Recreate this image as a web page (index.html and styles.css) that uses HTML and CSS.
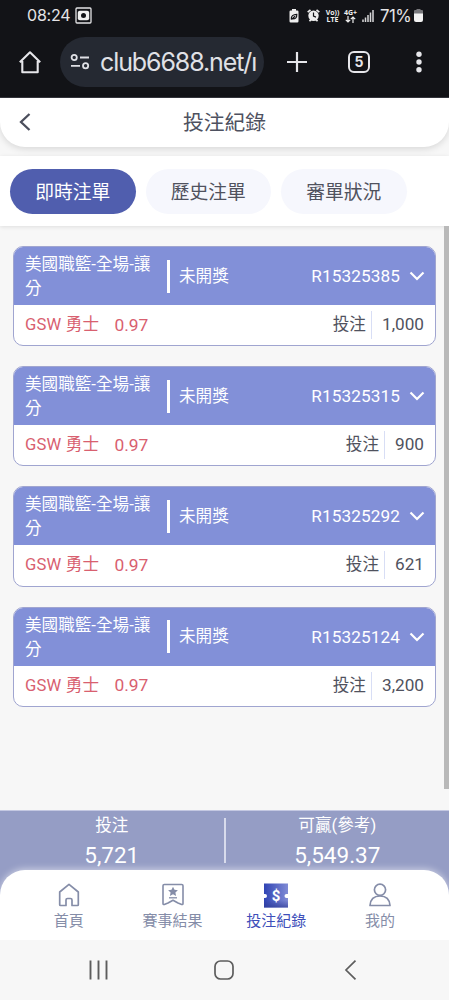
FILE: index.html
```html
<!DOCTYPE html>
<html lang="zh-Hant">
<head>
    <meta charset="UTF-8">
    <meta name="viewport" content="width=device-width, initial-scale=1.0">
    <title>投注紀錄</title>
    <link rel="stylesheet" href="styles.css">
</head>
<body>
    <div class="status-bar">
        <span class="time">08:24</span>
        <svg class="rec-icon" width="17" height="17" viewBox="0 0 17 17">
            <rect x="1" y="1" width="15" height="15" rx="1" fill="none" stroke="#e4e4e6" stroke-width="1.3"/>
            <rect x="2.8" y="3.8" width="11.4" height="9.4" rx="2" fill="#f0f0f0"/>
            <circle cx="8.5" cy="8.5" r="2.5" fill="#121317"/>
        </svg>
        <div class="status-right">
            <svg width="10" height="14" viewBox="0 0 10 14">
                <path d="M3 0h4v1.5h1.3q1.2 0 1.2 1.2v9.6q0 1.2-1.2 1.2H1.700q-1.200 0-1.200-1.200V2.700q0-1.200 1.200-1.200H3z" fill="#eee"/>
                <path d="M2.300 10.500C2 7 4 5.500 7.800 5.300C8 9 6 10.500 3.500 9.500M2.500 10.500L6 7.200" fill="none" stroke="#121317" stroke-width="1.200"/>
            </svg>
            <svg width="13" height="13" viewBox="0 0 13 13">
                <path d="M.7 3.200L3.500.8M12.300 3.200L9.500.8M2.500 12.300l1.500-1.800M10.500 12.300L9 10.500" stroke="#eee" stroke-width="1.700"/>
                <circle cx="6.500" cy="6.700" r="5.200" fill="#eee"/>
                <path d="M6.500 3.500v3.600l2.500 1" fill="none" stroke="#121317" stroke-width="1.200"/>
            </svg>
            <span class="net"><b>Vo))</b><b>LTE</b></span>
            <span class="net net-4g">
                <b>4G+</b>
                <svg width="11" height="7" viewBox="0 0 11 7">
                    <path d="M3 0v6M.8 3.800L3 6l2.200-2.200M8 7V1M5.800 3.200L8 1l2.200 2.200" fill="none" stroke="#eee" stroke-width="1.200"/>
                </svg>
            </span>
            <svg class="signal" width="12" height="12" viewBox="0 0 12 12">
                <path d="M1 12V9.500M3.500 12V7.500M6 12V5M8.500 12V2.500M11 12V0" stroke="#d8d8da" stroke-width="1.500"/>
            </svg>
            <span class="percent">71%</span>
            <svg width="9" height="13" viewBox="0 0 9 13">
                <path d="M2.500 0h4v1H8q1 0 1 1v3H0V2q0-1 1-1h1.500z" fill="#77777b"/>
                <path d="M0 4.500h9V11q0 2-2 2H2q-2 0-2-2z" fill="#f2f2f2"/>
            </svg>
        </div>
    </div>

    <div class="browser-bar">
        <svg class="home-icon" width="24" height="24" viewBox="0 0 24 24">
            <path d="M1.800 12.200L12 2.300l10.200 9.900M4.300 11v11.300h15.400V11" fill="none" stroke="#e6e6ea" stroke-width="2.100" stroke-linejoin="round"/>
        </svg>
        <div class="url-box">
            <svg width="20" height="18" viewBox="0 0 20 18">
                <g fill="none" stroke="#dfe0e5" stroke-width="1.800">
                    <circle cx="4.200" cy="4.500" r="2.600"/>
                    <path d="M10 4.500h9M1 12.800h9"/>
                    <circle cx="15.600" cy="12.800" r="2.600"/>
                </g>
            </svg>
            <span class="url">club6688.net/ı</span>
        </div>
        <svg class="plus-icon" width="22" height="22" viewBox="0 0 22 22">
            <path d="M11 1v20M1 11h20" stroke="#e6e6ea" stroke-width="2.200"/>
        </svg>
        <span class="tab-count">5</span>
        <svg class="dots-icon" width="6" height="22" viewBox="0 0 6 22">
            <g fill="#e6e6ea">
                <circle cx="3" cy="3.300" r="2.700"/>
                <circle cx="3" cy="11" r="2.700"/>
                <circle cx="3" cy="18.700" r="2.700"/>
            </g>
        </svg>
    </div>

    <div class="page">
        <header class="page-header">
            <svg class="back" width="12" height="18" viewBox="0 0 12 18">
                <path d="M10.500 1L2 9l8.500 8" fill="none" stroke="#4b4e5c" stroke-width="2.300"/>
            </svg>
            <h1>投注紀錄</h1>
        </header>

        <div class="tabs">
            <button class="tab active">即時注單</button>
            <button class="tab">歷史注單</button>
            <button class="tab">審單狀況</button>
        </div>

        <main class="content">
            <div class="list">
                <div class="card">
                    <div class="card-head">
                        <span class="game">美國職籃-全場-讓分</span>
                        <span class="state">未開獎</span>
                        <span class="order">R15325385</span>
                        <svg class="arrow" width="16" height="10" viewBox="0 0 16 10"><path d="M1.500 1.500L8 8l6.500-6.500"/></svg>
                    </div>
                    <div class="card-body">
                        <span class="team">GSW 勇士</span>
                        <span class="odds">0.97</span>
                        <span class="label">投注</span>
                        <span class="amount">1,000</span>
                    </div>
                </div>
                <div class="card">
                    <div class="card-head">
                        <span class="game">美國職籃-全場-讓分</span>
                        <span class="state">未開獎</span>
                        <span class="order">R15325315</span>
                        <svg class="arrow" width="16" height="10" viewBox="0 0 16 10"><path d="M1.500 1.500L8 8l6.500-6.500"/></svg>
                    </div>
                    <div class="card-body">
                        <span class="team">GSW 勇士</span>
                        <span class="odds">0.97</span>
                        <span class="label">投注</span>
                        <span class="amount">900</span>
                    </div>
                </div>
                <div class="card">
                    <div class="card-head">
                        <span class="game">美國職籃-全場-讓分</span>
                        <span class="state">未開獎</span>
                        <span class="order">R15325292</span>
                        <svg class="arrow" width="16" height="10" viewBox="0 0 16 10"><path d="M1.500 1.500L8 8l6.500-6.500"/></svg>
                    </div>
                    <div class="card-body">
                        <span class="team">GSW 勇士</span>
                        <span class="odds">0.97</span>
                        <span class="label">投注</span>
                        <span class="amount">621</span>
                    </div>
                </div>
                <div class="card">
                    <div class="card-head">
                        <span class="game">美國職籃-全場-讓分</span>
                        <span class="state">未開獎</span>
                        <span class="order">R15325124</span>
                        <svg class="arrow" width="16" height="10" viewBox="0 0 16 10"><path d="M1.500 1.500L8 8l6.500-6.500"/></svg>
                    </div>
                    <div class="card-body">
                        <span class="team">GSW 勇士</span>
                        <span class="odds">0.97</span>
                        <span class="label">投注</span>
                        <span class="amount">3,200</span>
                    </div>
                </div>
            </div>
            <div class="scrollbar"></div>
        </main>

        <div class="summary">
            <div class="total">
                <span>投注</span>
                <strong>5,721</strong>
            </div>
            <div class="total">
                <span>可贏(參考)</span>
                <strong>5,549.37</strong>
            </div>
        </div>

        <nav class="bottom-nav">
            <a class="nav-item">
                <svg width="24" height="26" viewBox="0 0 24 26">
                    <path d="M2.700 10L12 2.300l9.300 7.700V22.700q0 .8-.8.800H15v-5.500q0-1.500-1.500-1.500h-3Q9 16.500 9 18v5.500H3.500q-.8 0-.8-.8z" fill="none" stroke="#858da8" stroke-width="1.700" stroke-linejoin="round"/>
                </svg>
                首頁
            </a>
            <a class="nav-item">
                <svg width="24" height="26" viewBox="0 0 24 26">
                    <path d="M3.300 2.500h17.400q1.300 0 1.300 1.300v17.700q0 1.300-1.300.9L17 21l-5-2.800L7 21l-3.700 1.400q-1.300.4-1.300-.9V3.800q0-1.300 1.300-1.300z" fill="none" stroke="#858da8" stroke-width="1.600" stroke-linejoin="round"/>
                    <path d="M12 4.800l1.500 3 3.400.4-2.500 2.300.7 3.400-3.100-1.600-3.100 1.600.7-3.400-2.500-2.300 3.400-.4z" fill="#858da8"/>
                    <path d="M8 15.800h8" stroke="#858da8" stroke-width="1.300"/>
                </svg>
                賽事結果
            </a>
            <a class="nav-item active">
                <svg width="24" height="26" viewBox="0 0 24 26">
                    <defs>
                        <linearGradient id="ticket" x1="0" y1="0" x2="1" y2="0">
                            <stop offset="0" stop-color="#3044b4"/>
                            <stop offset="1" stop-color="#808bd5"/>
                        </linearGradient>
                        <linearGradient id="ticketShade" x1="0" y1="0" x2="0" y2="1">
                            <stop offset="0.700" stop-color="#303d96" stop-opacity="0"/>
                            <stop offset="1" stop-color="#303d96" stop-opacity=".7"/>
                        </linearGradient>
                    </defs>
                    <path d="M0 1.500h24v10.500h-1.500a2 2 0 0 0 0 4H24v9.500H0V16h1a2 2 0 0 0 0-4H0z" fill="url(#ticket)"/>
                    <path d="M0 1.500h24v10.500h-1.500a2 2 0 0 0 0 4H24v9.500H0V16h1a2 2 0 0 0 0-4H0z" fill="url(#ticketShade)"/>
                    <text class="dollar" x="12" y="18.500" text-anchor="middle">$</text>
                </svg>
                投注紀錄
            </a>
            <a class="nav-item">
                <svg width="24" height="26" viewBox="0 0 24 26">
                    <g fill="none" stroke="#858da8" stroke-width="1.700" stroke-linejoin="round">
                        <circle cx="12" cy="7.800" r="5.600"/>
                        <path d="M2 23.500q.6-9.500 10-9.500t10 9.500z"/>
                    </g>
                </svg>
                我的
            </a>
        </nav>
    </div>

    <div class="system-nav">
        <svg width="20" height="20" viewBox="0 0 20 20">
            <path d="M2.500.5v19M10.500.5v19M18.500.5v19" stroke="#5d5d5d" stroke-width="1.900"/>
        </svg>
        <svg width="20" height="20" viewBox="0 0 20 20">
            <rect x="1" y="1" width="18" height="18" rx="5.500" fill="none" stroke="#5d5d5d" stroke-width="1.700"/>
        </svg>
        <svg width="20" height="20" viewBox="0 0 20 20">
            <path d="M16.500.7L7 10l9.500 9.300" fill="none" stroke="#5d5d5d" stroke-width="1.700"/>
        </svg>
    </div>
</body>
</html>
```

FILE: styles.css
```css
* {
    box-sizing: border-box;
}
body {
    margin: 0;
    height: 1000px;
    display: flex;
    flex-direction: column;
    overflow: hidden;
    font-family: Roboto, "Noto Sans CJK TC", sans-serif;
    background-color: #f7f7f7;
}
svg {
    display: block;
    flex-shrink: 0;
}
.status-bar {
    display: flex;
    align-items: center;
    height: 31px;
    padding: 0 26px 0 27px;
    background-color: #121317;
    color: #e4e4e6;
    font-family: Inter, sans-serif;
}
.time {
    width: 48px;
    font-size: 16px;
    line-height: 20px;
    padding-bottom: 2px;
    letter-spacing: -0.2px;
    white-space: nowrap;
}
.status-right {
    display: flex;
    align-items: center;
    margin-left: auto;
}
.status-right svg + svg {
    margin-left: 8px;
}
.net {
    display: flex;
    flex-direction: column;
    align-items: center;
    width: 13px;
    margin-left: 6px;
    font: 7px/7px "Open Sans", sans-serif;
    color: #eee;
}
.net-4g {
    margin-left: 5px;
}
.signal {
    margin-left: 5px;
}
.percent {
    width: 34px;
    margin-left: 6px;
    font-size: 16.8px;
    letter-spacing: -0.5px;
}
.browser-bar {
    display: flex;
    align-items: center;
    height: 67px;
    padding: 0 27px 4px 18px;
    background-color: #121317;
    border-bottom: 1px solid #35363d;
}
.url-box {
    display: flex;
    align-items: center;
    width: 204px;
    height: 50px;
    margin-left: 18px;
    padding: 0 6px 0 10px;
    border-radius: 25px;
    background-color: #252932;
}
.url {
    margin-left: 10px;
    white-space: nowrap;
    color: #e0e1e6;
    font: 25px/34px Inter, sans-serif;
    letter-spacing: -1.1px;
}
.plus-icon {
    margin-left: 22px;
}
.tab-count {
    width: 22px;
    height: 22px;
    margin-left: 40px;
    border: 2px solid #e6e6ea;
    border-radius: 6px;
    color: #e6e6ea;
    font: bold 14px/18px Inter, sans-serif;
    text-align: center;
}
.dots-icon {
    margin-left: auto;
}
.page {
    display: flex;
    flex-direction: column;
    height: 842px;
}
.page-header {
    display: flex;
    align-items: center;
    height: 49px;
    padding: 0 19px;
    border-radius: 0 0 25px 25px;
    background-color: white;
    box-shadow: 0 2px 7px rgba(0, 0, 0, 0.13);
}
.back {
    margin-bottom: 2px;
}
.page-header h1 {
    flex: 1;
    margin: 1px 12px 0 0;
    color: #4e5160;
    font-size: 20.8px;
    font-weight: normal;
    line-height: 30px;
    text-align: center;
}
.tabs {
    display: flex;
    gap: 10px;
    height: 70px;
    margin-top: 9px;
    padding: 13px 10px 0;
    background-color: white;
    box-shadow: 0 1px 4px rgba(0, 0, 0, 0.1);
}
.tab {
    width: 125.5px;
    height: 45px;
    padding: 0 0 3px;
    border: none;
    border-radius: 23px;
    background-color: #f6f7fd;
    color: #50525e;
    font-family: inherit;
    font-size: 18.8px;
}
.tab.active {
    background-color: #505eae;
    color: white;
}
.content {
    display: flex;
    flex: 1;
    min-height: 0;
}
.list {
    display: flex;
    flex: 1;
    flex-direction: column;
    gap: 20px;
    padding: 20px 8px 0 13px;
}
.scrollbar {
    width: 5px;
    height: 563px;
    background-color: #b9b9b9;
}
.card {
    height: 100.2px;
    border: 1px solid #a0a5d0;
    border-radius: 10px;
    overflow: hidden;
    background-color: white;
    font-size: 16.6px;
}
.card-head {
    display: flex;
    align-items: center;
    height: 58px;
    padding: 0 10px 0 11px;
    background-color: #8290d8;
    color: white;
    line-height: 24px;
}
.game {
    width: 130px;
    padding-top: 2px;
}
.state {
    height: 33px;
    margin-left: 12px;
    padding-left: 9px;
    border-left: 3px solid white;
    line-height: 34px;
}
.order {
    margin-left: auto;
    font-size: 17.2px;
    letter-spacing: 0.1px;
}
.arrow {
    margin-left: 9px;
}
.arrow path {
    fill: none;
    stroke: white;
    stroke-width: 2.2;
}
.card-body {
    display: flex;
    align-items: center;
    height: 40px;
    padding: 0 11px;
    color: #50525e;
    line-height: 24px;
}
.team, .odds {
    color: #d8606f;
}
.team {
    letter-spacing: 0.2px;
}
.odds {
    margin-left: 15px;
    padding-bottom: 1px;
    font-size: 17.4px;
}
.label {
    margin-left: auto;
}
.amount {
    height: 28px;
    margin-left: 5px;
    padding-left: 10px;
    border-left: 1px solid #d8def5;
    font-size: 17.2px;
    line-height: 27px;
}
.summary {
    display: flex;
    height: 91px;
    margin-bottom: -31px;
    padding-top: 7px;
    border-top: 1px solid #c4c8e2;
    background-color: #959dc5;
    color: white;
}
.total {
    display: flex;
    flex: 1;
    flex-direction: column;
    align-items: center;
    height: 45px;
}
.total:first-child {
    border-right: 2px solid #d8dbec;
}
.total span {
    margin-top: -4px;
    font-size: 16.6px;
    line-height: 24px;
}
.total strong {
    font-size: 22.5px;
    font-weight: normal;
    line-height: 34px;
}
.bottom-nav {
    display: flex;
    height: 70px;
    flex-shrink: 0;
    padding: 12px 17px 0;
    border-radius: 25px 25px 0 0;
    background-color: white;
    box-shadow: 0 -1px 7px rgba(255, 255, 255, 0.55);
}
.nav-item {
    display: flex;
    flex: 1;
    flex-direction: column;
    align-items: center;
    color: #858da8;
    font-size: 15px;
    line-height: 26px;
}
.nav-item.active {
    color: #3e4fba;
}
.dollar {
    fill: white;
    font: bold 15px Roboto, sans-serif;
}
.system-nav {
    display: flex;
    align-items: center;
    justify-content: space-between;
    height: 60px;
    padding: 0 90px 0 88px;
    background-color: #f7f7f7;
}
```
